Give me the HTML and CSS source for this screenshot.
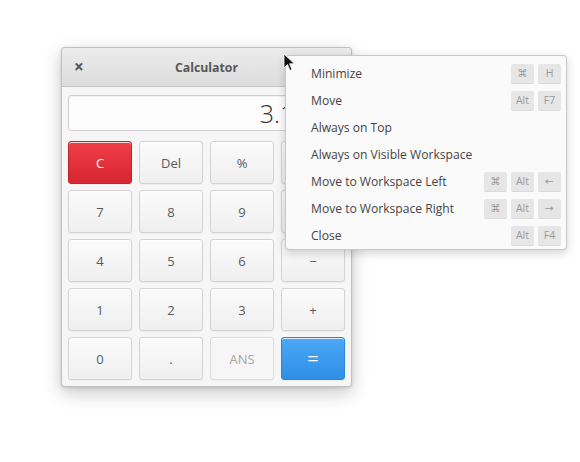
FILE: index.html
```html
<!DOCTYPE html>
<html>
<head>
<meta charset="utf-8">
<link rel="stylesheet" href="styles.css">
</head>
<body>
<div class="desktop">
  <div class="window">
    <div class="titlebar">
      <span class="close">×</span>
      <span class="title">Calculator</span>
    </div>
    <div class="content">
      <div class="display">3.1416</div>
      <div class="keys">
        <button class="btn red">C</button>
        <button class="btn">Del</button>
        <button class="btn">%</button>
        <button class="btn">÷</button>
        <button class="btn">7</button>
        <button class="btn">8</button>
        <button class="btn">9</button>
        <button class="btn">×</button>
        <button class="btn">4</button>
        <button class="btn">5</button>
        <button class="btn">6</button>
        <button class="btn">−</button>
        <button class="btn">1</button>
        <button class="btn">2</button>
        <button class="btn">3</button>
        <button class="btn">+</button>
        <button class="btn">0</button>
        <button class="btn">.</button>
        <button class="btn dim">ANS</button>
        <button class="btn blue">=</button>
      </div>
    </div>
  </div>

  <div class="menu">
    <div class="item"><span class="label">Minimize</span><span class="accel"><kbd>⌘</kbd><kbd>H</kbd></span></div>
    <div class="item"><span class="label">Move</span><span class="accel"><kbd>Alt</kbd><kbd>F7</kbd></span></div>
    <div class="item"><span class="label">Always on Top</span></div>
    <div class="item"><span class="label">Always on Visible Workspace</span></div>
    <div class="item"><span class="label">Move to Workspace Left</span><span class="accel"><kbd>⌘</kbd><kbd>Alt</kbd><kbd>←</kbd></span></div>
    <div class="item"><span class="label">Move to Workspace Right</span><span class="accel"><kbd>⌘</kbd><kbd>Alt</kbd><kbd>→</kbd></span></div>
    <div class="item"><span class="label">Close</span><span class="accel"><kbd>Alt</kbd><kbd>F4</kbd></span></div>
  </div>

  <svg class="cursor" width="14" height="20" viewBox="0 0 14 20">
    <path d="M1 1 L1 15 L4.5 11.5 L7 17.5 L9 16.6 L6.6 10.8 L11.5 10.8 Z" fill="#111" stroke="#fff" stroke-width="0.8" stroke-linejoin="round"/>
  </svg>
</div>
</body>
</html>
```

FILE: styles.css
```css
html, body {
  margin: 0;
  padding: 0;
  background: #ffffff;
}

.desktop {
  position: relative;
  width: 580px;
  height: 462px;
  overflow: hidden;
  font-family: "Open Sans", "Noto Sans", sans-serif;
}

.window {
  position: absolute;
  left: 61px;
  top: 47px;
  width: 291px;
  height: 340px;
  box-sizing: border-box;
  border: 1px solid rgba(0, 0, 0, 0.22);
  border-radius: 4px;
  background: #f6f6f6;
  box-shadow: 0 6px 18px rgba(0, 0, 0, 0.22), 0 1px 3px rgba(0, 0, 0, 0.12);
  overflow: hidden;
}

.titlebar {
  height: 38px;
  border-bottom: 1px solid #c4c4c4;
  background: linear-gradient(#ebebeb, #dddddd);
  display: flex;
  align-items: center;
  justify-content: center;
  position: relative;
}

.close {
  position: absolute;
  left: 12px;
  top: 9px;
  font-size: 17px;
  font-weight: 700;
  color: #555;
  line-height: 20px;
}

.title {
  font-size: 12.3px;
  font-weight: 700;
  color: #585858;
}

.content {
  padding: 8px 6px 6px 6px;
}

.display {
  height: 36px;
  box-sizing: border-box;
  border: 1px solid #cfcfcf;
  border-radius: 3px;
  background: #fdfdfd;
  box-shadow: inset 0 1px 1px rgba(0, 0, 0, 0.05);
  margin-bottom: 10px;
  font-size: 25px;
  font-weight: 300;
  color: #333;
  text-align: right;
  line-height: 34px;
  padding: 0 7px;
}

.keys {
  display: grid;
  grid-template-columns: repeat(4, 64px);
  grid-template-rows: repeat(5, 43px);
  column-gap: 7px;
  row-gap: 6px;
}

.btn {
  margin: 0;
  padding: 0;
  font-family: "Open Sans", "Noto Sans", sans-serif;
  font-size: 13px;
  color: #5a5a5a;
  border: 1px solid #d3d3d3;
  border-radius: 3px;
  background: linear-gradient(#fbfbfb, #efefef);
  box-shadow: 0 1px 0 rgba(255, 255, 255, 0.8) inset, 0 1px 1px rgba(0, 0, 0, 0.04);
}

.btn.dim {
  color: #a5a5a5;
  background: #f6f6f6;
  border-color: #dedede;
}

.btn.red {
  color: #fff;
  border-color: #c3232b;
  background: linear-gradient(#ef3e48, #d6262f);
}

.btn.blue {
  color: #fff;
  font-size: 20px;
  border-color: #2a86d8;
  background: linear-gradient(#4ba8f6, #2f8fe6);
}

.menu {
  position: absolute;
  left: 285px;
  top: 55px;
  width: 282px;
  height: 195px;
  box-sizing: border-box;
  padding: 4px 0;
  background: #fafafa;
  border: 1px solid rgba(0, 0, 0, 0.2);
  border-radius: 4px;
  box-shadow: 0 3px 10px rgba(0, 0, 0, 0.18);
}

.item {
  height: 27px;
  display: flex;
  align-items: center;
  justify-content: space-between;
  padding: 0 5px 0 25px;
}

.label {
  font-size: 12.1px;
  color: #444;
}

.accel {
  display: flex;
  gap: 4px;
}

kbd {
  width: 23px;
  height: 20px;
  box-sizing: border-box;
  border-radius: 2px;
  background: #e6e6e6;
  border-bottom: 1px solid #dadada;
  font-family: "Open Sans", "Noto Sans", "DejaVu Sans", sans-serif;
  font-size: 10.5px;
  color: #999;
  display: flex;
  align-items: center;
  justify-content: center;
}

.cursor {
  position: absolute;
  left: 283px;
  top: 53px;
}
```
